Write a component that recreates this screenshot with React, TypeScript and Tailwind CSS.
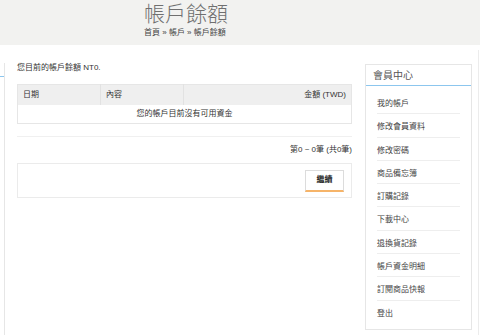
const font = {
  fontFamily: '"Liberation Sans", "Noto Sans CJK TC", sans-serif',
};

const menu = [
  "我的帳戶",
  "修改會員資料",
  "修改密碼",
  "商品備忘簿",
  "訂購記錄",
  "下載中心",
  "退換貨記錄",
  "帳戶資金明細",
  "訂閱商品快報",
  "登出",
];

export default function App() {
  return (
    <div
      className="w-[480px] h-[335px] overflow-hidden bg-white text-[#333]"
      style={font}
    >
      <div className="h-[45px] bg-[#f2f2f0] pl-[144px] pt-[1px]">
        <h1 className="text-[21px] leading-[26px] text-[#6f6f6f] font-light">帳戶餘額</h1>
        <p className="text-[8px] leading-[10px] mt-[1px] text-[#444]">首頁 » 帳戶 » 帳戶餘額</p>
      </div>

      <div className="flex">
        {/* cut-off left panel */}
        <div className="w-[5px] mt-[18px] h-[290px] border-r border-[#e6e6e6]">
          <div className="h-[14px] border-b border-[#8cc6ee]" />
        </div>

        {/* main content */}
        <div className="ml-[12px] w-[335px] pt-[18px]">
          <p className="text-[8px] leading-[10px]">您目前的帳戶餘額 NT0.</p>

          <table className="mt-[11px] w-full border-collapse border border-[#e6e6e6] text-[8px]">
            <thead>
              <tr className="bg-[#efefef] h-[20px]">
                <th className="w-[83px] border-r border-[#e2e2e2] text-left font-normal pl-[5px]">日期</th>
                <th className="w-[83px] border-r border-[#e2e2e2] text-left font-normal pl-[5px]">內容</th>
                <th className="text-right font-normal pr-[5px]">金額 (TWD)</th>
              </tr>
            </thead>
            <tbody>
              <tr className="h-[19px]">
                <td colSpan={3} className="text-center">您的帳戶目前沒有可用資金</td>
              </tr>
            </tbody>
          </table>

          <div className="mt-[12px] border-t border-[#f0f0f0]" />
          <p className="mt-[8px] text-right text-[8px] leading-[10px]">第0 ~ 0筆 (共0筆)</p>

          <div className="mt-[8px] h-[35px] border border-[#ebebeb] flex items-center justify-end pr-[7px]">
            <button className="w-[39px] h-[22px] bg-white border border-[#dcdcdc] border-b-2 border-b-[#f6b469] text-[8px] font-bold text-[#222]">
              繼續
            </button>
          </div>
        </div>

        {/* sidebar */}
        <div className="ml-[13px] mt-[19px] w-[107px] h-[266px] border border-[#e6e6e6]">
          <div className="h-[21px] border-b border-[#8cc6ee] pl-[7px] text-[10px] leading-[21px] text-[#555]">
            會員中心
          </div>
          <ul className="pt-[5px] px-[11px]">
            {menu.map((item, i) => (
              <li
                key={item}
                className={
                  "h-[23.3px] pt-[8px] text-[8px] leading-[10px] text-[#444] " +
                  (i < menu.length - 1 ? "border-b border-[#eeeeee]" : "")
                }
              >
                {item}
              </li>
            ))}
          </ul>
        </div>

        <div className="ml-[6px] mt-[5px] h-[290px] border-l border-[#ececec]" />
      </div>
    </div>
  );
}
